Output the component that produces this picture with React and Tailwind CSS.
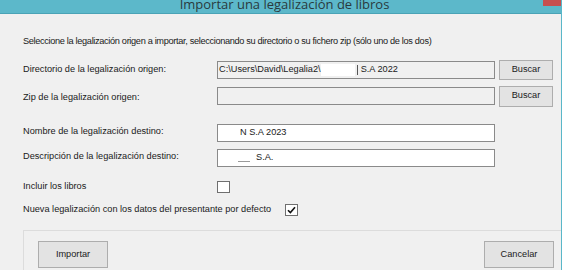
import React from 'react';

const Field = ({ children, white = false }) => (
    <div
        className={`flex items-center w-[278px] h-[18px] border border-[#8a8a8a] px-[1px] overflow-hidden whitespace-nowrap ${white ? 'bg-white' : 'bg-[#f0f0f0]'}`}
    >
        {children}
    </div>
);

const Button = ({ label, className = '' }) => (
    <button className={`flex items-center justify-center bg-[#e3e3e3] border border-[#adadad] text-[#1a1a1a] ${className}`}>
        {label}
    </button>
);

const Check = ({ checked }) => (
    <div className="w-[13px] h-[12px] bg-white border border-[#6f6f6f] flex items-center justify-center">
        {checked && (
            <svg width="9" height="8" viewBox="0 0 9 8">
                <path d="M1 4.2 L3.4 6.6 L8 1.2" fill="none" stroke="#111" strokeWidth="1.6" />
            </svg>
        )}
    </div>
);

const App = () => {
    return (
        <div
            className="w-[562px] h-[270px] overflow-hidden bg-[#f0f0f0] border-r border-[#5ab7c9] flex flex-col text-[9.2px] text-[#1a1a1a]"
            style={{ fontFamily: '"Liberation Sans", Arial, sans-serif' }}
        >
            {/* Title bar */}
            <div className="relative h-[14px] shrink-0 bg-[#5cb8ca] border-b border-[#4aa3b6] flex justify-center overflow-hidden">
                <span
                    className="text-[13px] leading-[14px] mt-[-3px] ml-[8px] text-[#2a3a3e]"
                    style={{ fontFamily: '"Open Sans", "Noto Sans", sans-serif' }}
                >
                    Importar una legalización de libros
                </span>
                <div className="absolute right-0 top-0 w-[18px] h-[6px] bg-[#c75050]"></div>
            </div>

            <div className="pl-[23px] flex flex-col">
                <p className="mt-[22px] leading-[11px] tracking-[-0.33px]">
                    Seleccione la legalización origen a importar, seleccionando su directorio o su fichero zip (sólo uno de los dos)
                </p>

                {/* Directorio */}
                <div className="flex items-center h-[20px] mt-[13px]">
                    <span className="w-[194px]">Directorio de la legalización origen:</span>
                    <Field>
                        <span>C:\Users\David\Legalia2\</span>
                        <span className="inline-block w-[34px] h-[12px] bg-white"></span>
                        <span className="inline-block w-[1px] h-[10px] ml-[2px] bg-[#555]"></span>
                        <span className="ml-[3px]">S.A 2022</span>
                    </Field>
                    <Button label="Buscar" className="ml-[4px] w-[54px] h-[20px]" />
                </div>

                {/* Zip */}
                <div className="flex items-center h-[20px] mt-[6px]">
                    <span className="w-[194px] pt-[4px]">Zip de la legalización origen:</span>
                    <Field />
                    <Button label="Buscar" className="ml-[4px] w-[54px] h-[21px]" />
                </div>

                {/* Nombre */}
                <div className="flex items-center h-[18px] mt-[18px]">
                    <span className="w-[194px] mb-[3px]">Nombre de la legalización destino:</span>
                    <Field white>
                        <span className="ml-[21px]">N S.A 2023</span>
                    </Field>
                </div>

                {/* Descripcion */}
                <div className="flex items-center h-[18px] mt-[7px]">
                    <span className="w-[194px] mb-[2px]">Descripción de la legalización destino:</span>
                    <Field white>
                        <span className="ml-[19px] inline-block w-[12px] h-[1px] mt-[6px] bg-[#9a9a9a]"></span>
                        <span className="ml-[6px]">S.A.</span>
                    </Field>
                </div>

                {/* Incluir */}
                <div className="flex items-center h-[13px] mt-[13px]">
                    <span className="w-[194px] pt-[1px]">Incluir los libros</span>
                    <Check />
                </div>

                {/* Nueva */}
                <div className="flex items-center h-[13px] mt-[10px]">
                    <span className="pt-[1px]">Nueva legalización con los datos del presentante por defecto</span>
                    <span className="ml-[14px]"><Check checked /></span>
                </div>

                {/* Bottom panel */}
                <div className="mt-[14px] h-[60px] border-t border-l border-[#dcdcdc] flex items-start justify-between pt-[10px] pl-[14px] pr-[7px]">
                    <Button label="Importar" className="w-[70px] h-[27px]" />
                    <Button label="Cancelar" className="w-[70px] h-[27px]" />
                </div>
            </div>
        </div>
    );
};

export default App;
